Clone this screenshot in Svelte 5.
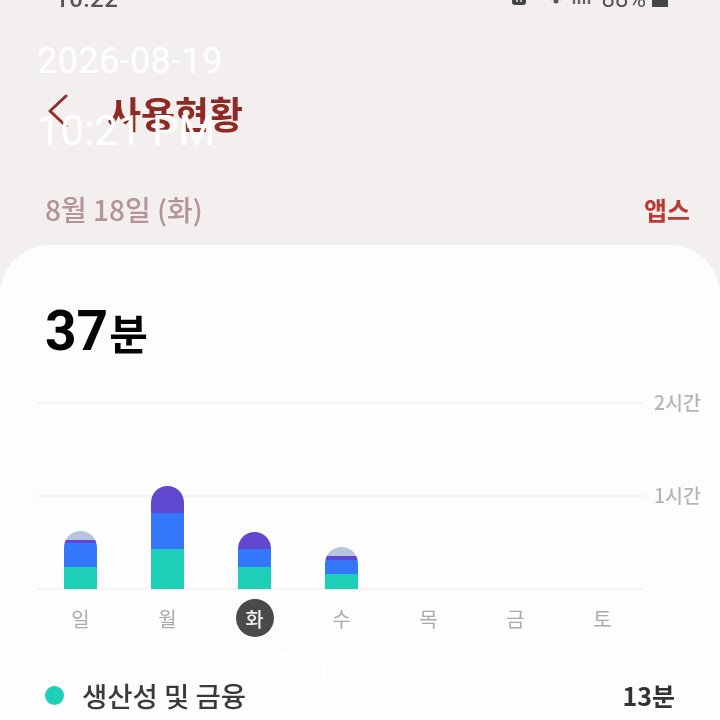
<script lang="ts">
  const days = [
    { label: '일', bars: { grey: 9, purple: 3, blue: 24, teal: 22 } },
    { label: '월', bars: { grey: 0, purple: 27, blue: 36, teal: 40 } },
    { label: '화', bars: { grey: 0, purple: 17, blue: 18, teal: 22 }, active: true },
    { label: '수', bars: { grey: 9, purple: 4, blue: 14, teal: 15 } },
    { label: '목' },
    { label: '금' },
    { label: '토' },
  ];
</script>

<div class="screen">
  <div class="content">
    <div class="status">
      <span class="clock">10:22</span>
      <div class="status-right">
        <svg width="16" height="10" viewBox="0 0 16 10"><path d="M1 0h14v5a3 3 0 0 1-3 3H4a3 3 0 0 1-3-3z" fill="#444"/><path d="M6 0v5M10 0v5" stroke="#f3efef" stroke-width="1.4"/></svg>
        <svg class="signal" width="46" height="10" viewBox="0 0 46 10">
          <circle cx="9" cy="4" r="2.5" fill="#555"/>
          <path d="M2 0l3 3M16 0l-3 3" stroke="#777" stroke-width="1.4"/>
          <path d="M27 3v4M32 1v6M37 0v7M42 0v7" stroke="#666" stroke-width="2.4"/>
        </svg>
        <span class="pct">88%</span>
        <span class="battery"></span>
      </div>
    </div>

    <header class="topbar">
      <svg class="back" width="22" height="34" viewBox="0 0 22 34" fill="none">
        <path d="M19 2L3 17l16 15" stroke="#8e2f2a" stroke-width="3" stroke-linecap="round" stroke-linejoin="round"/>
      </svg>
      <h1>사용현황</h1>
    </header>

    <div class="subbar">
      <span class="date">8월 18일 (화)</span>
      <span class="apps">앱스</span>
    </div>

    <main class="card">
      <div class="total"><b>37</b><span>분</span></div>

      <div class="chart">
        <div class="plot">
          <div class="grid-row"><i></i><span>2시간</span></div>
          <div class="grid-row"><i></i><span>1시간</span></div>
          <div class="grid-row base"><i></i></div>
          <div class="bars">
            {#each days as day}
              <div class="col">
                {#if day.bars}
                  <div class="bar">
                    {#if day.bars.grey}<div class="seg grey" style={`height:${day.bars.grey}px`}></div>{/if}
                    <div class="seg purple" style={`height:${day.bars.purple}px`}></div>
                    <div class="seg blue" style={`height:${day.bars.blue}px`}></div>
                    <div class="seg teal" style={`height:${day.bars.teal}px`}></div>
                  </div>
                {/if}
              </div>
            {/each}
          </div>
        </div>
        <div class="days">
          {#each days as day}
            <div class="day"><span class:active={day.active}>{day.label}</span></div>
          {/each}
        </div>
      </div>

      <div class="legend">
        <span class="dot"></span>
        <span class="name">생산성 및 금융</span>
        <span class="mins">13분</span>
      </div>
    </main>
  </div>

  <div class="stamp">
    <div class="stamp-date">2026-08-19</div>
    <div class="stamp-time">10:21 PM</div>
  </div>
  <div class="brand">
    <svg width="34" height="30" viewBox="0 0 34 30"><path d="M2 2h9v26H2zM14 2h9v9h-9zM14 14h9v14h-9z" fill="#fff"/></svg>
    <span>Timespread</span>
  </div>
</div>

<style>
  :global(body) {
    margin: 0;
    background: #f3efef;
  }

  .screen {
    position: relative;
    width: 720px;
    height: 720px;
    overflow: hidden;
    background: #f3efef;
    font-family: "Noto Sans CJK KR", "Noto Sans", sans-serif;
  }

  .content {
    height: 720px;
    display: flex;
    flex-direction: column;
    filter: blur(0.7px);
  }

  .status {
    height: 7px;
    flex-shrink: 0;
    padding: 0 52px 0 55px;
    display: flex;
    justify-content: space-between;
    align-items: flex-end;
    overflow: hidden;
  }

  .clock {
    font: 500 24px/16px Roboto, sans-serif;
    color: #555;
    letter-spacing: 0.5px;
  }

  .status-right {
    display: flex;
    align-items: flex-end;
  }

  .status-right svg {
    flex-shrink: 0;
  }

  .signal { margin-left: 20px; }

  .pct {
    font: 400 24px/16px Roboto, sans-serif;
    color: #555;
    margin-left: 8px;
  }

  .battery {
    width: 16px;
    height: 8px;
    background: #444;
    margin-left: 6px;
  }

  .topbar {
    height: 72px;
    flex-shrink: 0;
    padding: 0 0 0 47px;
    display: flex;
    align-items: center;
    box-sizing: border-box;
    margin-top: 70px;
  }

  .back {
    margin-top: -4px;
  }

  .topbar h1 {
    margin: 0 0 0 38px;
    font-size: 37px;
    font-weight: 700;
    color: #8e2a25;
    line-height: 1;
  }

  .subbar {
    flex-shrink: 0;
    height: 96px;
    padding: 24px 30px 0 45px;
    display: flex;
    justify-content: space-between;
    align-items: center;
    box-sizing: border-box;
  }

  .date {
    font-size: 28px;
    font-weight: 500;
    color: #b49494;
  }

  .apps {
    font-size: 25px;
    font-weight: 700;
    color: #b93a30;
  }

  .card {
    flex: 1;
    background: #fdfdfd;
    border-radius: 50px 50px 0 0;
    display: flex;
    flex-direction: column;
  }

  .total {
    height: 157px;
    flex-shrink: 0;
    padding: 48px 0 0 45px;
    box-sizing: border-box;
    display: flex;
    align-items: baseline;
    color: #050505;
    line-height: 76px;
  }

  .total b {
    font: 700 55px/76px Roboto, sans-serif;
  }

  .total span {
    font-size: 42px;
    font-weight: 700;
    margin-left: 1px;
  }

  .chart {
    padding: 0 0 0 37px;
    flex-shrink: 0;
  }

  .plot {
    position: relative;
    height: 186px;
    display: flex;
    flex-direction: column;
  }

  .grid-row {
    height: 93px;
    display: flex;
    align-items: flex-start;
    gap: 10px;
    position: relative;
  }

  .grid-row.base {
    height: 0;
  }

  .grid-row i {
    display: block;
    width: 607px;
    height: 2px;
    background: #f4f4f4;
  }

  .grid-row span {
    font-size: 19.5px;
    font-weight: 500;
    line-height: 18px;
    color: #b5b5b5;
    margin-top: -9px;
  }

  .bars {
    position: absolute;
    left: 0;
    bottom: -1px;
    width: 609px;
    height: 110px;
    display: grid;
    grid-template-columns: repeat(7, 1fr);
    align-items: end;
  }

  .col {
    display: flex;
    justify-content: center;
  }

  .bar {
    width: 33px;
    border-radius: 17px 17px 0 0;
    overflow: hidden;
    display: flex;
    flex-direction: column;
  }

  .seg.grey { background: #b7c4de; }
  .seg.purple { background: #6047cf; }
  .seg.blue { background: #3477fb; }
  .seg.teal { background: #1ccfb6; }

  .days {
    width: 609px;
    display: grid;
    grid-template-columns: repeat(7, 1fr);
    margin-top: 11px;
  }

  .day {
    display: flex;
    justify-content: center;
  }

  .day span {
    width: 38px;
    height: 38px;
    border-radius: 50%;
    display: flex;
    align-items: center;
    justify-content: center;
    font-size: 20px;
    color: #aaa;
  }

  .day span.active {
    background: #4a4a4a;
    color: #eee;
    font-weight: 500;
  }

  .legend {
    margin-top: 40px;
    padding: 0 45px 0 45px;
    display: flex;
    align-items: center;
    height: 36px;
  }

  .dot {
    width: 19px;
    height: 19px;
    border-radius: 50%;
    background: #1ccfb6;
    flex-shrink: 0;
  }

  .name {
    margin-left: 18px;
    flex: 1;
    font-size: 27.5px;
    font-weight: 500;
    color: #3a3a3a;
  }

  .mins {
    font-size: 25px;
    font-weight: 700;
    color: #333;
  }

  .stamp {
    position: absolute;
    left: 37px;
    top: 40px;
    color: #fff;
    font-family: Roboto, sans-serif;
    font-weight: 400;
  }

  .stamp-date {
    font-size: 36px;
    line-height: 42px;
    letter-spacing: 0.4px;
  }

  .stamp-time {
    font-size: 42px;
    line-height: 50px;
    margin-top: 24px;
  }

  .brand {
    position: absolute;
    left: 228px;
    top: 646px;
    display: flex;
    align-items: center;
    gap: 8px;
    color: #fff;
    font: 700 41px/40px Roboto, sans-serif;
  }
</style>
